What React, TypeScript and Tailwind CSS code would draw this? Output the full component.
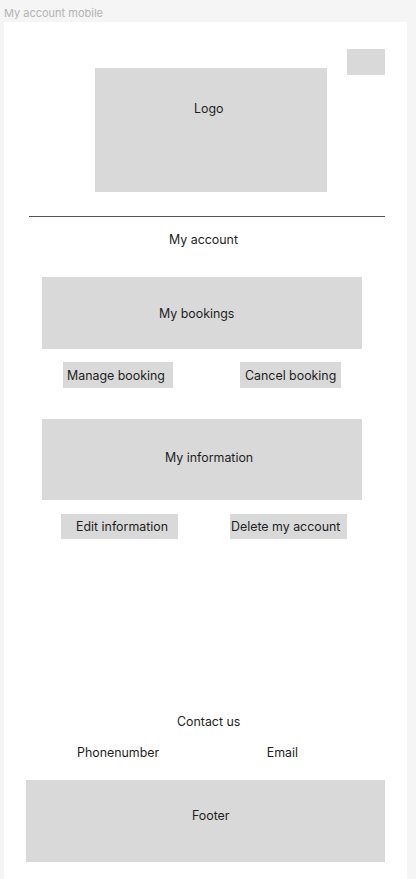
import React from "react";

const Box = ({ className, children }: { className: string; children?: React.ReactNode }) => (
  <div className={`bg-[#d9d9d9] flex whitespace-nowrap ${className}`}>{children}</div>
);

const App = () => {
  return (
    <div
      className="min-h-[879px] w-[416px] bg-[#f5f5f5] text-[12.4px] leading-4 text-[#1e1e1e]"
      style={{ fontFamily: "Inter, 'Liberation Sans', sans-serif" }}
    >
      <div className="h-[22px] pl-1 pt-[7px] text-[11px] leading-[13px] text-[#b3b3b3]">My account mobile</div>
      <div className="ml-1 w-[403px] h-[857px] bg-white flex flex-col">
        {/* header */}
        <div className="flex items-start h-[170px]">
          <Box className="mt-[46px] ml-[91px] w-[232px] h-[124px] pt-[33px] pl-[99px]">Logo</Box>
          <Box className="mt-[27px] ml-[20px] w-[38px] h-[26px]" />
        </div>
        <div className="mt-[24px] ml-[25px] w-[356px] h-px bg-[#555]" />
        <div className="mt-[15px] ml-[165px]">My account</div>

        <Box className="mt-[29px] ml-[38px] w-[320px] h-[72px] pt-[29px] pl-[117px]">My bookings</Box>
        <div className="mt-[13px] flex">
          <Box className="ml-[59px] w-[110px] h-[26px] items-center pt-[2px] pl-[4px]">Manage booking</Box>
          <Box className="ml-[67px] w-[101px] h-[26px] items-center pt-[2px] pl-[5px]">Cancel booking</Box>
        </div>

        <Box className="mt-[31px] ml-[38px] w-[320px] h-[81px] pt-[31px] pl-[123px]">My information</Box>
        <div className="mt-[14px] flex">
          <Box className="ml-[57px] w-[117px] h-[25px] items-center pl-[15px]">Edit information</Box>
          <Box className="ml-[52px] w-[117px] h-[25px] items-center pl-[1px]">Delete my account</Box>
        </div>

        <div className="mt-[175px] ml-[173px]">Contact us</div>
        <div className="mt-[15px] flex">
          <span className="ml-[73px]">Phonenumber</span>
          <span className="ml-auto mr-[109px]">Email</span>
        </div>
        <Box className="mt-[19px] ml-[22px] w-[359px] h-[82px] pt-[28px] pl-[166px]">Footer</Box>
      </div>
    </div>
  );
};

export default App;
